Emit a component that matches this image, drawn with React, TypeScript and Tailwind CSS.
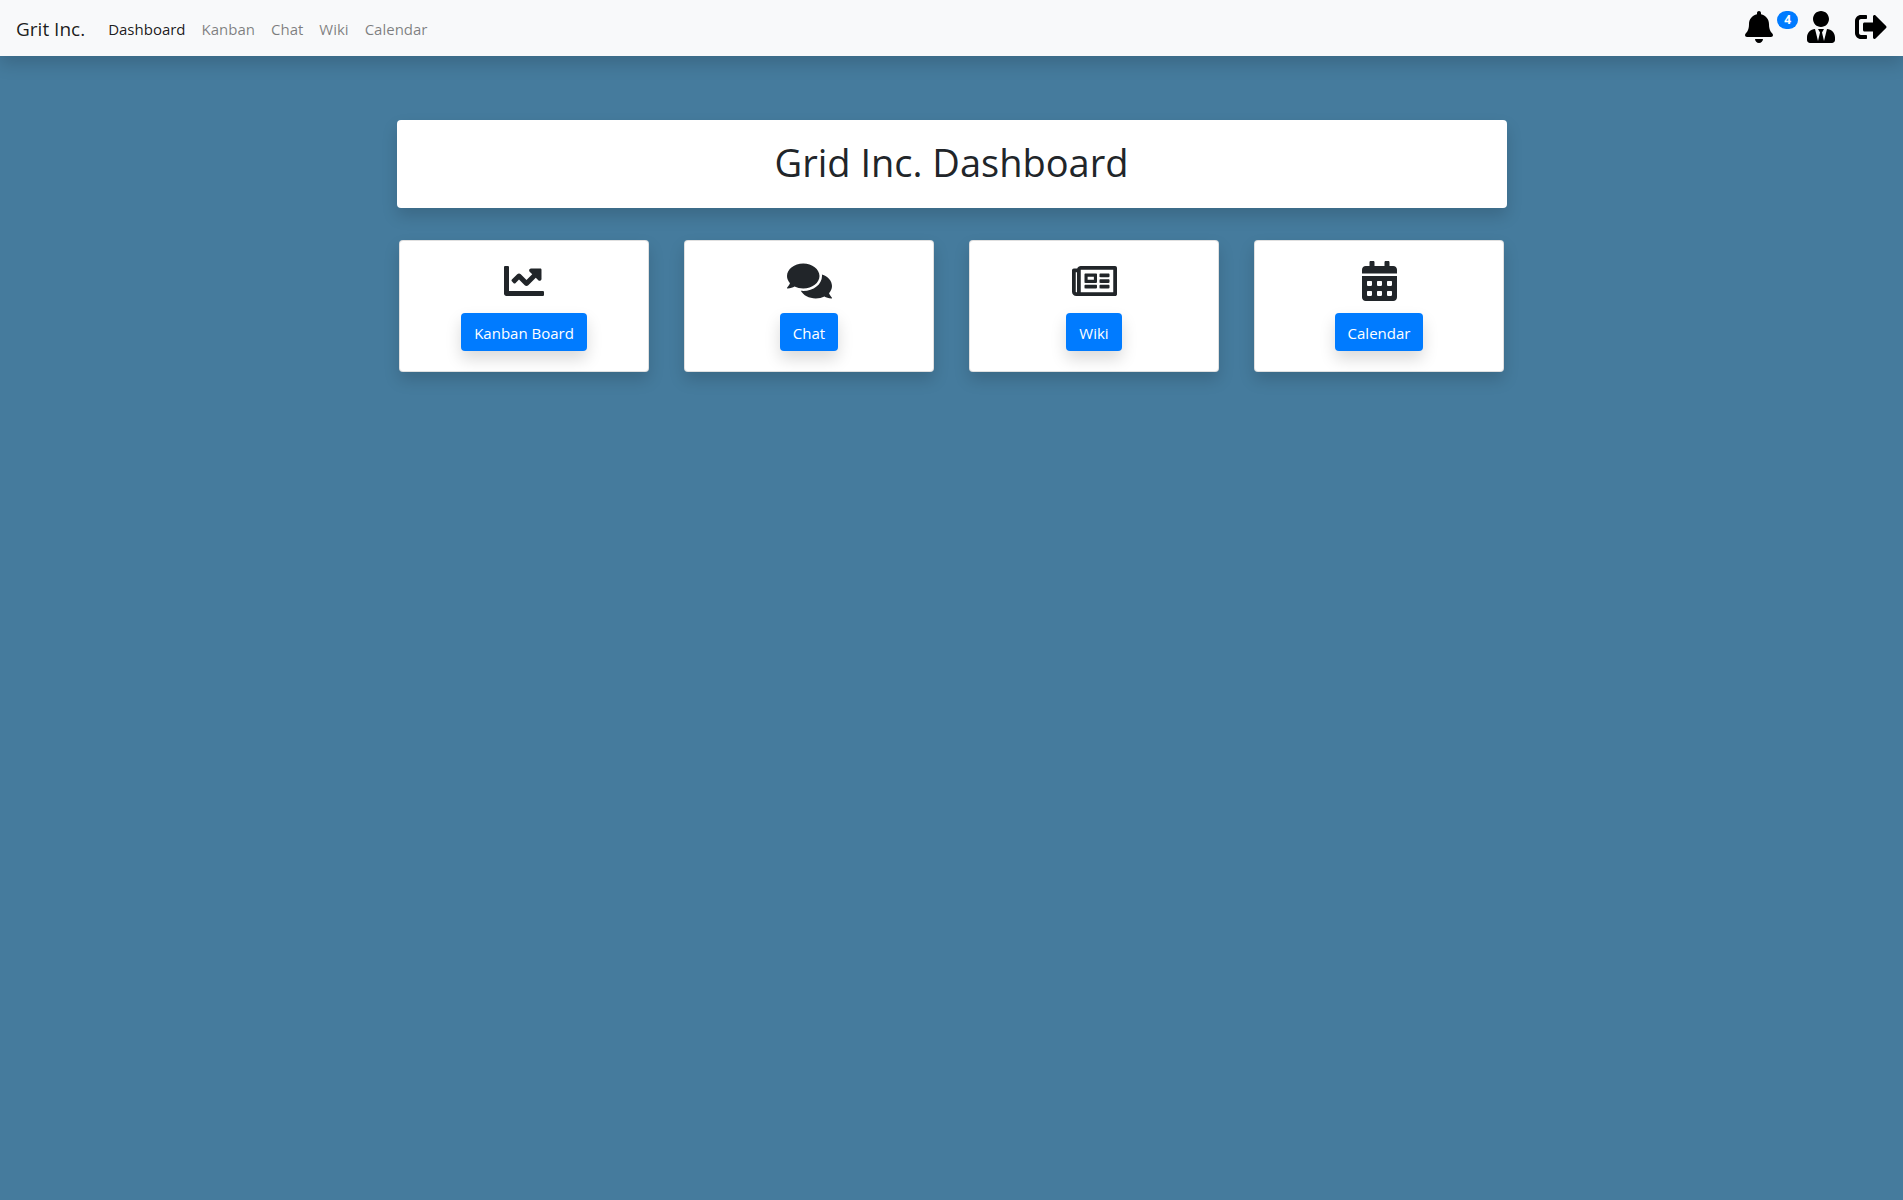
import {
  FaBell,
  FaCalendarAlt,
  FaChartLine,
  FaComments,
  FaRegNewspaper,
  FaSignOutAlt,
  FaUserTie,
} from "react-icons/fa";

const links = [
  { label: "Dashboard", active: true },
  { label: "Kanban" },
  { label: "Chat" },
  { label: "Wiki" },
  { label: "Calendar" },
];

const cards = [
  { label: "Kanban Board", Icon: FaChartLine, iconWidth: "w-10" },
  { label: "Chat", Icon: FaComments, iconWidth: "w-[45px]" },
  { label: "Wiki", Icon: FaRegNewspaper, iconWidth: "w-[45px]" },
  { label: "Calendar", Icon: FaCalendarAlt, iconWidth: "w-[35px]" },
];

function Navbar() {
  return (
    <nav className="relative flex h-14 items-center bg-[#f8f9fa] px-4 pb-0.5 shadow-[0_8px_16px_rgba(0,0,0,0.15)]">
      <a href="#" className="mr-[23px] pt-1 text-[19px] leading-7 text-black/90">
        Grit Inc.
      </a>
      <ul className="flex gap-4 pt-1 text-[15px] leading-6">
        {links.map(({ label, active }) => (
          <li key={label}>
            <a href="#" className={active ? "text-black/90" : "text-black/50"}>
              {label}
            </a>
          </li>
        ))}
      </ul>
      <div className="ml-auto flex items-start text-black">
        <a href="#" aria-label="Notifications" className="flex items-start gap-1">
          <FaBell className="h-8 w-7" />
          <span className="h-[18px] rounded-full bg-[#007bff] px-[7px] text-xs leading-[18px] font-bold text-white">
            4
          </span>
        </a>
        <a href="#" aria-label="Profile" className="ml-[9px]">
          <FaUserTie className="h-8 w-7" />
        </a>
        <a href="#" aria-label="Sign out" className="ml-5">
          <FaSignOutAlt className="size-8" />
        </a>
      </div>
    </nav>
  );
}

export default function App() {
  return (
    <div className="min-h-screen bg-[#457b9d] font-['Open_Sans','Noto_Sans',sans-serif] text-[#212529]">
      <Navbar />
      <main className="pt-16">
        <header className="mx-auto flex h-[88px] max-w-[1110px] items-center justify-center rounded bg-white pb-1 shadow-[0_8px_16px_rgba(0,0,0,0.15)]">
          <h1 className="text-[38px] leading-12">Grid Inc. Dashboard</h1>
        </header>
        <section className="mx-auto mt-8 grid max-w-[1105px] grid-cols-4 gap-[35px]">
          {cards.map(({ label, Icon, iconWidth }) => (
            <article
              key={label}
              className="flex flex-col items-center gap-3 rounded border border-black/12 bg-white bg-clip-border p-5 shadow-[0_8px_16px_rgba(0,0,0,0.15)]"
            >
              <Icon className={`h-10 ${iconWidth}`} />
              <button
                type="button"
                className="h-[38px] cursor-pointer rounded bg-[#007bff] px-[13px] pt-0.5 text-[15px] leading-6 text-white shadow-[0_8px_16px_rgba(0,0,0,0.15)]"
              >
                {label}
              </button>
            </article>
          ))}
        </section>
      </main>
    </div>
  );
}
